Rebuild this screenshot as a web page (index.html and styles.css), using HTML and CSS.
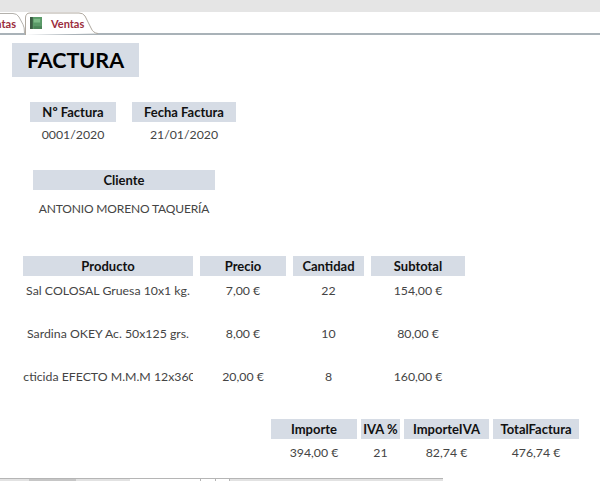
FILE: index.html
```html
<!DOCTYPE html>
<html lang="es">
<head>
<meta charset="utf-8">
<title>Ventas</title>
<link rel="stylesheet" href="styles.css">
</head>
<body>
<div class="top-band"></div>
<div class="tabs">
  <div class="tab tab-prev">
    <svg class="tab-shape" width="26" height="23" viewBox="0 0 26 23"><path d="M0 1.5H13Q17 1.5 19 5L23 12.5Q24.5 15 24.5 21" fill="#fff" stroke="#b3b1ac"/></svg>
    <span class="tab-label tab-label-prev">Ventas</span>
  </div>
  <div class="tab tab-active">
    <svg class="tab-shape" width="74" height="23" viewBox="0 0 74 23"><path d="M.5 23V6Q.5 1 5 1H54Q58 1 60 4L66 16Q68 21 73 21.5" fill="#fff" stroke="#b0a9a0"/></svg>
    <svg class="tab-icon" width="12" height="12" viewBox="0 0 13 13"><rect width="13" height="13" fill="#5a9a68"/><rect width="3" height="13" fill="#3c5c44"/><rect x="4" y="2" width="7" height="4" fill="#7dbb88"/><rect x="4" y="10" width="9" height="3" fill="#4b8458"/></svg>
    <span class="tab-label">Ventas</span>
  </div>
</div>
<main class="report">
  <h1 class="title">FACTURA</h1>
  <div class="row invoice-row">
    <div class="col c-num"><div class="head">Nº Factura</div><div class="val">0001/2020</div></div>
    <div class="col c-date"><div class="head">Fecha Factura</div><div class="val">21/01/2020</div></div>
  </div>
  <div class="row client-row">
    <div class="col c-client"><div class="head">Cliente</div><div class="val client-val">ANTONIO MORENO TAQUERÍA</div></div>
  </div>
  <div class="lines">
    <div class="head">Producto</div><div class="head">Precio</div><div class="head">Cantidad</div><div class="head">Subtotal</div>
    <div class="val clip"><span>Sal COLOSAL Gruesa 10x1 kg.</span></div><div class="val">7,00 €</div><div class="val">22</div><div class="val">154,00 €</div>
    <div class="val clip"><span>Sardina OKEY Ac. 50x125 grs.</span></div><div class="val">8,00 €</div><div class="val">10</div><div class="val">80,00 €</div>
    <div class="val clip"><span>Insecticida EFECTO M.M.M 12x360 ml.</span></div><div class="val">20,00 €</div><div class="val">8</div><div class="val">160,00 €</div>
  </div>
  <div class="totals">
    <div class="head">Importe</div><div class="head">IVA %</div><div class="head">ImporteIVA</div><div class="head">TotalFactura</div>
    <div class="val">394,00 €</div><div class="val">21</div><div class="val">82,74 €</div><div class="val">476,74 €</div>
  </div>
</main>
<div class="bottom-bar">
  <div class="seg seg-a"></div><div class="seg seg-b"></div><div class="seg seg-c"></div><div class="seg seg-d"></div><div class="seg seg-e"></div><div class="seg seg-f"></div><div class="seg seg-g"></div>
</div>
</body>
</html>
```

FILE: styles.css
```css
* { box-sizing: border-box; }
html, body { margin: 0; padding: 0; }
body {
  width: 600px;
  height: 481px;
  overflow: hidden;
  background: #fff;
  font-family: "Lato", "Open Sans", sans-serif;
  font-size: 12.3px;
  color: #444;
  display: flex;
  flex-direction: column;
}
.top-band { height: 12px; background: #e5e5e5; flex: none; }
.tabs {
  height: 23px;
  flex: none;
  display: flex;
  align-items: flex-start;
  border-bottom: 2px solid #a9b2b8;
}
.tab { height: 23px; position: relative; display: flex; align-items: center; }
.tab-shape { position: absolute; left: 0; top: 0; }
.tab-prev {
  width: 25px;
  overflow: hidden;
  justify-content: flex-end;
  padding: 0 9px 1px 0;
}
.tab-label {
  position: relative;
  flex: none;
  color: #9b2c3c;
  font-size: 11px;
  font-weight: 700;
}
.tab-active {
  width: 74px;
  padding: 0 0 1px 5px;
  gap: 9px;
}
.tab-icon { flex: none; position: relative; }
.report { flex: 1; display: flex; flex-direction: column; min-height: 0; }
.title {
  margin: 8px 0 0 12px;
  width: 127px;
  height: 34px;
  line-height: 34px;
  background: #d6dce5;
  color: #000;
  font-size: 21.5px;
  font-weight: 700;
  text-align: center;
}
.head {
  height: 20px;
  line-height: 20px;
  background: #d6dce5;
  color: #111;
  font-size: 13px;
  font-weight: 700;
  text-align: center;
  white-space: nowrap;
}
.val {
  height: 26px;
  line-height: 26px;
  text-align: center;
  white-space: nowrap;
}
.row { display: flex; }
.invoice-row { margin-top: 25px; padding-left: 30px; gap: 16px; }
.c-num { width: 86px; }
.c-date { width: 104px; }
.client-row { margin-top: 22px; padding-left: 33px; }
.c-client { width: 182px; }
.client-val { height: 38px; line-height: 38px; letter-spacing: -0.15px; font-size: 12px; }
.lines {
  margin: 28px 0 0 23px;
  display: grid;
  grid-template-columns: 170px 86px 71px 94px;
  column-gap: 7px;
  grid-template-rows: 20px;
  grid-auto-rows: 43px;
  width: 442px;
  align-items: start;
}
.lines .val { height: 29px; line-height: 29px; }
.clip {
  display: flex;
  justify-content: center;
  overflow: hidden;
}
.clip span { flex: none; }
.totals {
  margin: 14px 0 0 271px;
  display: grid;
  grid-template-columns: 86px 39px 85px 86px;
  column-gap: 4px;
  width: 307px;
}
.totals .val { height: 28px; line-height: 28px; }
.bottom-bar {
  height: 3px;
  flex: none;
  display: flex;
}
.seg { height: 3px; border-top: 1px solid #b5b5b5; background: #e2e2e2; }
.seg-a { width: 29px; }
.seg-b { width: 47px; background: #c6c6c6; }
.seg-c { width: 54px; }
.seg-d { width: 70px; background: #fff; }
.seg-e { width: 15px; background: #fff; border-left: 1px solid #b5b5b5; }
.seg-f { width: 15px; background: #fff; border-left: 1px solid #b5b5b5; border-right: 1px solid #b5b5b5; }
.seg-g { width: 213px; }
```
